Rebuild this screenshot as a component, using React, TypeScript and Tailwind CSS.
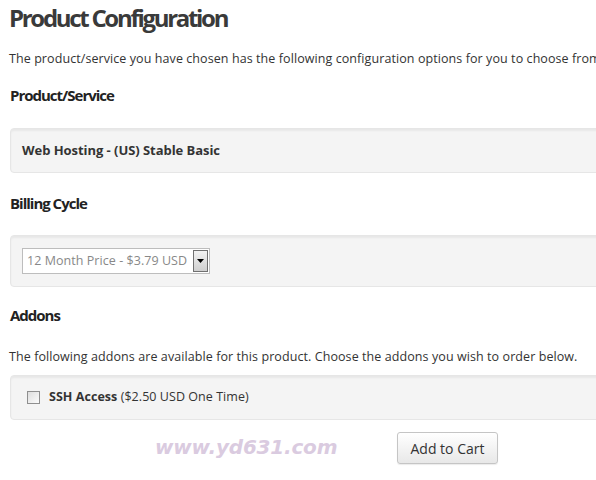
import React from "react";

const sans = { fontFamily: '"Open Sans", "Noto Sans", sans-serif' } as React.CSSProperties;

function Well({ children, className = "" }: { children: React.ReactNode; className?: string }) {
  return (
    <div
      className={`ml-[10px] w-[620px] rounded-[4px] border border-[#e6e6e6] bg-[#f4f4f4] shadow-[inset_0_2px_2px_rgba(0,0,0,0.05)] ${className}`}
    >
      {children}
    </div>
  );
}

function H2({ children, className = "" }: { children: React.ReactNode; className?: string }) {
  return (
    <h2 className={`pl-[10px] text-[15px] font-bold leading-[20px] tracking-[-1px] text-[#222] ${className}`}>
      {children}
    </h2>
  );
}

export default function App() {
  return (
    <div className="relative h-[480px] w-[596px] overflow-hidden bg-white text-[#333]" style={sans}>
      <h1 className="pl-[9px] pt-[2px] text-[24px] font-bold leading-[32px] tracking-[-2.3px] text-[#3a3a3a]">
        Product Configuration
      </h1>
      <p className="mt-[16px] whitespace-nowrap pl-[9px] text-[12.5px] leading-[18px] tracking-[0.08px] text-[#333]">
        The product/service you have chosen has the following configuration options for you to choose from.
      </p>
      <H2 className="mt-[17px]">Product/Service</H2>
      <Well className="mt-[23px] h-[45px] flex items-center">
        <span className="pl-[11px] text-[13px] font-bold tracking-[-0.05px] text-[#333]">
          Web Hosting - (US) Stable Basic
        </span>
      </Well>
      <H2 className="mt-[20px]">Billing Cycle</H2>
      <Well className="mt-[22px] h-[52px] flex items-center">
        <div className="ml-[11px] flex h-[26px] w-[188px] items-stretch border border-[#bdbdbd] bg-white">
          <span className="flex flex-1 items-center overflow-hidden whitespace-nowrap pl-[4px] text-[12.5px] tracking-[0.05px] text-[#888]">
            12 Month Price - $3.79 USD
          </span>
          <span className="m-[1px] flex w-[15px] shrink-0 items-center justify-center border border-[#707070] bg-gradient-to-b from-[#f2f2f2] to-[#cfcfcf]">
            <svg width="7" height="4" viewBox="0 0 7 4">
              <path d="M0 0 H7 L3.5 4 Z" fill="#000" />
            </svg>
          </span>
        </div>
      </Well>
      <H2 className="mt-[18px]">Addons</H2>
      <p className="mt-[23px] whitespace-nowrap pl-[9px] text-[12.5px] leading-[18px] tracking-[0.08px] text-[#333]">
        The following addons are available for this product. Choose the addons you wish to order below.
      </p>
      <Well className="mt-[9px] h-[45px] flex items-center">
        <span className="ml-[16px] inline-block h-[13px] w-[13px] border border-[#8f8f8f] bg-gradient-to-br from-[#dedede] to-[#fbfbfb]" />
        <span className="ml-[9px] text-[12.5px] tracking-[0.05px] text-[#333]">
          <b className="font-bold">SSH Access</b> ($2.50 USD One Time)
        </span>
      </Well>
      <div className="relative mt-[12px] flex h-[32px] items-center">
        <span
          className="absolute left-[155px] top-[0px] text-[20px] font-bold italic tracking-[-0.2px] text-[#dacbe0]"
          style={{ fontFamily: '"DejaVu Sans", sans-serif' }}
        >
          www.yd631.com
        </span>
        <button className="ml-[397px] h-[32px] w-[101px] rounded-[3px] border border-[#c5c5c5] bg-gradient-to-b from-[#ffffff] to-[#e8e8e8] text-[14px] text-[#333] shadow-[0_1px_1px_rgba(0,0,0,0.08)]">
          Add to Cart
        </button>
      </div>
    </div>
  );
}
